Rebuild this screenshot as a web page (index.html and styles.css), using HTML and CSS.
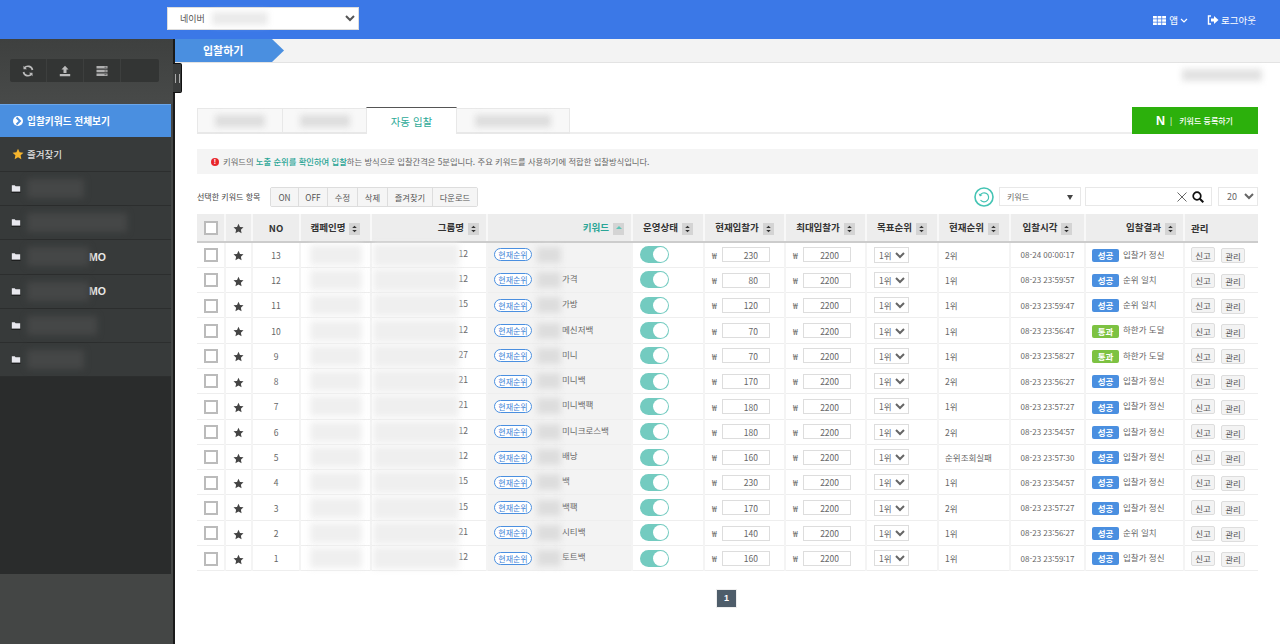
FILE: index.html
```html
<!DOCTYPE html>
<html lang="ko">
<head>
<meta charset="utf-8">
<title>입찰하기</title>
<link rel="stylesheet" href="styles.css">
</head>
<body>
<svg class="defs" width="0" height="0">
  <symbol id="sort" viewBox="0 0 12 12"><path d="M3.500 5 6 2.500 8.500 5zM3.500 7h5L6 9.500z" fill="#333"/></symbol>
  <symbol id="star" viewBox="0 0 24 24"><path d="M12 1.500l3.200 7.100 7.700.9-5.700 5.200 1.500 7.600L12 18.500l-6.700 3.800 1.500-7.600L1.100 9.500l7.700-.9z"/></symbol>
  <symbol id="folder" viewBox="0 0 12 10"><path d="M1 1h3.500l1 1.300H11v6.700H1z" fill="#e8e8ee"/><path d="M0.500 9.500h11" stroke="#111" stroke-width="1"/></symbol>
</svg>
<header class="topbar">
  <select class="site-select"><option>네이버</option></select>
  <div class="blur blur-site"></div>
  <nav class="topnav">
    <span class="topnav-item"><svg class="ico-apps" viewBox="0 0 13 9"><path d="M0 0h13v2.500H0zM0 3.250h13v2.500H0zM0 6.500h13V9H0z" fill="#fff"/><path d="M4.300 0v9M8.700 0v9" stroke="#3b78e7" stroke-width=".8"/></svg>앱<svg class="ico-chev" viewBox="0 0 8 5"><path d="M1 1l3 3 3-3" fill="none" stroke="#fff" stroke-width="1.200"/></svg></span>
    <span class="topnav-item"><svg class="ico-logout" viewBox="0 0 12 10"><path d="M4 1H1.500v8H4" fill="none" stroke="#fff" stroke-width="1.400"/><path d="M4 3.500h3V1l4.500 4L7 9V6.500H4z" fill="#fff"/></svg>로그아웃</span>
  </nav>
</header>
<div class="shell">
  <aside class="sidebar">
    <div class="side-tools">
      <div class="toolbox">
        <span class="tool"><svg viewBox="0 0 12 12"><path d="M10.500 5A4.600 4.600 0 0 0 2.400 3M1.500 7a4.600 4.600 0 0 0 8.100 2" fill="none" stroke="#bbb" stroke-width="1.700"/><path d="M1.500.8v3.500H5zM10.500 11.200V7.700H7z" fill="#bbb"/></svg></span>
        <span class="tool"><svg viewBox="0 0 12 12"><path d="M6 .8 9.500 4.500H7.500V8h-3V4.500h-2zM.8 9h10.400v2.200H.8z" fill="#bbb"/></svg></span>
        <span class="tool"><svg viewBox="0 0 12 12"><path d="M.5 1h11v2.500H.5zM.5 4.700h11v2.500H.5zM.5 8.400h11v2.500H.5z" fill="#b0b0b0"/><path d="M8.500 2.200h2M8.500 6h2M8.500 9.700h2" stroke="#444" stroke-width=".8"/></svg></span>
        <span class="tool"></span>
      </div>
    </div>
    <a class="side-active"><span class="bullet"><svg viewBox="0 0 10 10"><path d="M3.500 1.500 7 5 3.500 8.500" fill="none" stroke="#4a8fe0" stroke-width="2"/></svg></span>입찰키워드 전체보기</a>
    <a class="side-item side-fav"><svg class="ico-fav"><use href="#star"/></svg>즐겨찾기</a>
    <a class="side-item"><svg class="ico-folder"><use href="#folder"/></svg><span class="blur-dark w57"></span></a>
    <a class="side-item"><svg class="ico-folder"><use href="#folder"/></svg><span class="blur-dark w100"></span></a>
    <a class="side-item"><svg class="ico-folder"><use href="#folder"/></svg><span class="blur-dark w62"></span><b>MO</b></a>
    <a class="side-item"><svg class="ico-folder"><use href="#folder"/></svg><span class="blur-dark w62"></span><b>MO</b></a>
    <a class="side-item"><svg class="ico-folder"><use href="#folder"/></svg><span class="blur-dark w70"></span></a>
    <a class="side-item"><svg class="ico-folder"><use href="#folder"/></svg><span class="blur-dark w57"></span></a>
    <div class="side-fill"></div>
    <div class="side-foot"></div>
    <span class="side-handle"></span>
  </aside>
  <main class="main">
    <div class="crumb"><span class="crumb-label">입찰하기</span></div>
    <div class="content">
      <div class="account"><span class="blur blur-account"></span></div>
      <div class="tabs">
        <span class="tab tab1"><span class="blur blur-tab1"></span></span>
        <span class="tab tab2"><span class="blur blur-tab1"></span></span>
        <span class="tab tab-on">자동 입찰</span>
        <span class="tab tab4"><span class="blur blur-tab4"></span></span>
        <span class="tab-line"></span>
        <a class="btn-naver"><b class="n">N</b><i>|</i>키워드 등록하기</a>
      </div>
      <p class="notice"><span class="alert">!</span>키워드의 <em>노출 순위를 확인하여 입찰</em>하는 방식으로 입찰간격은 5분입니다. 주요 키워드를 사용하기에 적합한 입찰방식입니다.</p>
      <div class="toolbar">
        <span class="tb-label">선택한 키워드 항목</span>
        <div class="btn-group"><button>ON</button><button>OFF</button><button>수정</button><button>삭제</button><button>즐겨찾기</button><button>다운로드</button></div>
        <svg class="ico-refresh" viewBox="0 0 20 20"><circle cx="10" cy="10" r="9" fill="none" stroke="#45c4b4" stroke-width="1.600"/><path d="M6 8.500A4.500 4.500 0 1 1 6.500 13" fill="none" stroke="#45c4b4" stroke-width="1.200"/><path d="M4.500 6.500l1.500 3 2.500-1.500z" fill="#45c4b4"/></svg>
        <div class="fake-select">키워드<span class="tri"></span></div>
        <div class="search"><svg class="ico-x" viewBox="0 0 10 10"><path d="M.5.500l9 9M9.500.500l-9 9" stroke="#555" stroke-width=".9"/></svg><svg class="ico-search" viewBox="0 0 12 12"><circle cx="5" cy="5" r="3.800" fill="none" stroke="#111" stroke-width="1.700"/><path d="M7.800 7.800 11.300 11.300" stroke="#111" stroke-width="2"/></svg></div>
        <select class="page-size"><option>20</option></select>
      </div>
      <table class="grid">
        <colgroup><col class="c1"><col class="c2"><col class="c3"><col class="c4"><col class="c5"><col class="c6"><col class="c7"><col class="c8"><col class="c8"><col class="c7"><col class="c7"><col class="c12"><col class="c13"><col class="c14"></colgroup>
        <thead>
          <tr>
            <th><span class="check"></span></th>
            <th><svg class="ico-star"><use href="#star"/></svg></th>
            <th>NO</th>
            <th>캠페인명<svg class="sort"><use href="#sort"/></svg></th>
            <th class="right">그룹명<svg class="sort"><use href="#sort"/></svg></th>
            <th class="right kw">키워드<span class="sort-up"></span></th>
            <th>운영상태<svg class="sort"><use href="#sort"/></svg></th>
            <th>현재입찰가<svg class="sort"><use href="#sort"/></svg></th>
            <th>최대입찰가<svg class="sort"><use href="#sort"/></svg></th>
            <th>목표순위<svg class="sort"><use href="#sort"/></svg></th>
            <th>현재순위<svg class="sort"><use href="#sort"/></svg></th>
            <th>입찰시각<svg class="sort"><use href="#sort"/></svg></th>
            <th class="right">입찰결과<svg class="sort"><use href="#sort"/></svg></th>
            <th class="left">관리</th>
          </tr>
        </thead>
        <tbody>
          <tr><td><span class="check"></span></td><td><svg class="ico-star"><use href="#star"/></svg></td><td>13</td><td><span class="blur-cell b-camp"></span></td><td class="group"><span class="blur-cell b-group"></span>12</td><td class="kwcell"><span class="pill">현재순위</span><span class="blur-cell b-kw"></span></td><td class="ctl"><span class="toggle"></span></td><td class="ctl"><span class="won">₩</span><input class="num" value="230"></td><td class="ctl"><span class="won">₩</span><input class="num" value="2200"></td><td class="ctl"><select class="rank"><option>1위</option></select></td><td class="left">2위</td><td class="time">08-24 00:00:17</td><td class="left"><span class="tag ok">성공</span>입찰가 정신</td><td class="left"><button class="mini">신고</button><button class="mini low">관리</button></td></tr>
          <tr><td><span class="check"></span></td><td><svg class="ico-star"><use href="#star"/></svg></td><td>12</td><td><span class="blur-cell b-camp"></span></td><td class="group"><span class="blur-cell b-group"></span>12</td><td class="kwcell"><span class="pill">현재순위</span><span class="blur-cell b-kw"></span>가격</td><td class="ctl"><span class="toggle"></span></td><td class="ctl"><span class="won">₩</span><input class="num" value="80"></td><td class="ctl"><span class="won">₩</span><input class="num" value="2200"></td><td class="ctl"><select class="rank"><option>1위</option></select></td><td class="left">1위</td><td class="time">08-23 23:59:57</td><td class="left"><span class="tag ok">성공</span>순위 일치</td><td class="left"><button class="mini">신고</button><button class="mini low">관리</button></td></tr>
          <tr><td><span class="check"></span></td><td><svg class="ico-star"><use href="#star"/></svg></td><td>11</td><td><span class="blur-cell b-camp"></span></td><td class="group"><span class="blur-cell b-group"></span>15</td><td class="kwcell"><span class="pill">현재순위</span><span class="blur-cell b-kw"></span>가방</td><td class="ctl"><span class="toggle"></span></td><td class="ctl"><span class="won">₩</span><input class="num" value="120"></td><td class="ctl"><span class="won">₩</span><input class="num" value="2200"></td><td class="ctl"><select class="rank"><option>1위</option></select></td><td class="left">1위</td><td class="time">08-23 23:59:47</td><td class="left"><span class="tag ok">성공</span>순위 일치</td><td class="left"><button class="mini">신고</button><button class="mini low">관리</button></td></tr>
          <tr><td><span class="check"></span></td><td><svg class="ico-star"><use href="#star"/></svg></td><td>10</td><td><span class="blur-cell b-camp"></span></td><td class="group"><span class="blur-cell b-group"></span>12</td><td class="kwcell"><span class="pill">현재순위</span><span class="blur-cell b-kw"></span>메신저백</td><td class="ctl"><span class="toggle"></span></td><td class="ctl"><span class="won">₩</span><input class="num" value="70"></td><td class="ctl"><span class="won">₩</span><input class="num" value="2200"></td><td class="ctl"><select class="rank"><option>1위</option></select></td><td class="left">1위</td><td class="time">08-23 23:56:47</td><td class="left"><span class="tag pass">통과</span>하한가 도달</td><td class="left"><button class="mini">신고</button><button class="mini low">관리</button></td></tr>
          <tr><td><span class="check"></span></td><td><svg class="ico-star"><use href="#star"/></svg></td><td>9</td><td><span class="blur-cell b-camp"></span></td><td class="group"><span class="blur-cell b-group"></span>27</td><td class="kwcell"><span class="pill">현재순위</span><span class="blur-cell b-kw"></span>미니</td><td class="ctl"><span class="toggle"></span></td><td class="ctl"><span class="won">₩</span><input class="num" value="70"></td><td class="ctl"><span class="won">₩</span><input class="num" value="2200"></td><td class="ctl"><select class="rank"><option>1위</option></select></td><td class="left">1위</td><td class="time">08-23 23:58:27</td><td class="left"><span class="tag pass">통과</span>하한가 도달</td><td class="left"><button class="mini">신고</button><button class="mini low">관리</button></td></tr>
          <tr><td><span class="check"></span></td><td><svg class="ico-star"><use href="#star"/></svg></td><td>8</td><td><span class="blur-cell b-camp"></span></td><td class="group"><span class="blur-cell b-group"></span>21</td><td class="kwcell"><span class="pill">현재순위</span><span class="blur-cell b-kw"></span>미니백</td><td class="ctl"><span class="toggle"></span></td><td class="ctl"><span class="won">₩</span><input class="num" value="170"></td><td class="ctl"><span class="won">₩</span><input class="num" value="2200"></td><td class="ctl"><select class="rank"><option>1위</option></select></td><td class="left">2위</td><td class="time">08-23 23:56:27</td><td class="left"><span class="tag ok">성공</span>입찰가 정신</td><td class="left"><button class="mini">신고</button><button class="mini low">관리</button></td></tr>
          <tr><td><span class="check"></span></td><td><svg class="ico-star"><use href="#star"/></svg></td><td>7</td><td><span class="blur-cell b-camp"></span></td><td class="group"><span class="blur-cell b-group"></span>21</td><td class="kwcell"><span class="pill">현재순위</span><span class="blur-cell b-kw"></span>미니백팩</td><td class="ctl"><span class="toggle"></span></td><td class="ctl"><span class="won">₩</span><input class="num" value="180"></td><td class="ctl"><span class="won">₩</span><input class="num" value="2200"></td><td class="ctl"><select class="rank"><option>1위</option></select></td><td class="left">1위</td><td class="time">08-23 23:57:27</td><td class="left"><span class="tag ok">성공</span>입찰가 정신</td><td class="left"><button class="mini">신고</button><button class="mini low">관리</button></td></tr>
          <tr><td><span class="check"></span></td><td><svg class="ico-star"><use href="#star"/></svg></td><td>6</td><td><span class="blur-cell b-camp"></span></td><td class="group"><span class="blur-cell b-group"></span>12</td><td class="kwcell"><span class="pill">현재순위</span><span class="blur-cell b-kw"></span>미니크로스백</td><td class="ctl"><span class="toggle"></span></td><td class="ctl"><span class="won">₩</span><input class="num" value="180"></td><td class="ctl"><span class="won">₩</span><input class="num" value="2200"></td><td class="ctl"><select class="rank"><option>1위</option></select></td><td class="left">2위</td><td class="time">08-23 23:54:57</td><td class="left"><span class="tag ok">성공</span>입찰가 정신</td><td class="left"><button class="mini">신고</button><button class="mini low">관리</button></td></tr>
          <tr><td><span class="check"></span></td><td><svg class="ico-star"><use href="#star"/></svg></td><td>5</td><td><span class="blur-cell b-camp"></span></td><td class="group"><span class="blur-cell b-group"></span>12</td><td class="kwcell"><span class="pill">현재순위</span><span class="blur-cell b-kw"></span>배낭</td><td class="ctl"><span class="toggle"></span></td><td class="ctl"><span class="won">₩</span><input class="num" value="160"></td><td class="ctl"><span class="won">₩</span><input class="num" value="2200"></td><td class="ctl"><select class="rank"><option>1위</option></select></td><td class="left">순위조회실패</td><td class="time">08-23 23:57:30</td><td class="left"><span class="tag ok">성공</span>입찰가 정신</td><td class="left"><button class="mini">신고</button><button class="mini low">관리</button></td></tr>
          <tr><td><span class="check"></span></td><td><svg class="ico-star"><use href="#star"/></svg></td><td>4</td><td><span class="blur-cell b-camp"></span></td><td class="group"><span class="blur-cell b-group"></span>15</td><td class="kwcell"><span class="pill">현재순위</span><span class="blur-cell b-kw"></span>백</td><td class="ctl"><span class="toggle"></span></td><td class="ctl"><span class="won">₩</span><input class="num" value="230"></td><td class="ctl"><span class="won">₩</span><input class="num" value="2200"></td><td class="ctl"><select class="rank"><option>1위</option></select></td><td class="left">1위</td><td class="time">08-23 23:54:57</td><td class="left"><span class="tag ok">성공</span>입찰가 정신</td><td class="left"><button class="mini">신고</button><button class="mini low">관리</button></td></tr>
          <tr><td><span class="check"></span></td><td><svg class="ico-star"><use href="#star"/></svg></td><td>3</td><td><span class="blur-cell b-camp"></span></td><td class="group"><span class="blur-cell b-group"></span>15</td><td class="kwcell"><span class="pill">현재순위</span><span class="blur-cell b-kw"></span>백팩</td><td class="ctl"><span class="toggle"></span></td><td class="ctl"><span class="won">₩</span><input class="num" value="170"></td><td class="ctl"><span class="won">₩</span><input class="num" value="2200"></td><td class="ctl"><select class="rank"><option>1위</option></select></td><td class="left">2위</td><td class="time">08-23 23:57:27</td><td class="left"><span class="tag ok">성공</span>입찰가 정신</td><td class="left"><button class="mini">신고</button><button class="mini low">관리</button></td></tr>
          <tr><td><span class="check"></span></td><td><svg class="ico-star"><use href="#star"/></svg></td><td>2</td><td><span class="blur-cell b-camp"></span></td><td class="group"><span class="blur-cell b-group"></span>21</td><td class="kwcell"><span class="pill">현재순위</span><span class="blur-cell b-kw"></span>시티백</td><td class="ctl"><span class="toggle"></span></td><td class="ctl"><span class="won">₩</span><input class="num" value="140"></td><td class="ctl"><span class="won">₩</span><input class="num" value="2200"></td><td class="ctl"><select class="rank"><option>1위</option></select></td><td class="left">1위</td><td class="time">08-23 23:56:27</td><td class="left"><span class="tag ok">성공</span>순위 일치</td><td class="left"><button class="mini">신고</button><button class="mini low">관리</button></td></tr>
          <tr><td><span class="check"></span></td><td><svg class="ico-star"><use href="#star"/></svg></td><td>1</td><td><span class="blur-cell b-camp"></span></td><td class="group"><span class="blur-cell b-group"></span>12</td><td class="kwcell"><span class="pill">현재순위</span><span class="blur-cell b-kw"></span>토트백</td><td class="ctl"><span class="toggle"></span></td><td class="ctl"><span class="won">₩</span><input class="num" value="160"></td><td class="ctl"><span class="won">₩</span><input class="num" value="2200"></td><td class="ctl"><select class="rank"><option>1위</option></select></td><td class="left">1위</td><td class="time">08-23 23:59:17</td><td class="left"><span class="tag ok">성공</span>입찰가 정신</td><td class="left"><button class="mini">신고</button><button class="mini low">관리</button></td></tr>
        </tbody>
      </table>
      <div class="pager"><span class="page">1</span></div>
    </div>
  </main>
</div>
</body>
</html>
```
FILE: styles.css
```css
* { box-sizing: border-box; }
html, body { margin: 0; height: 644px; overflow: hidden; }
body { font-family: "Noto Sans CJK KR", "Liberation Sans", sans-serif; font-size: 9px; color: #555; background: #fff; }
.defs { position: absolute; }
.topbar { height: 39px; background: #3b78e7; display: flex; align-items: flex-start; padding: 7px 24px 0 167px; position: relative; }
.site-select { width: 192px; height: 23px; border: 1px solid #ddd; background: #fff; font: 9px "Noto Sans CJK KR", sans-serif; color: #555; padding-left: 8px; }
.blur { display: block; background: #d8d8d8; filter: blur(3px); }
.blur-site { position: absolute; left: 212px; top: 12px; width: 56px; height: 13px; background: #eaeaea; }
.topnav { margin-left: auto; display: flex; gap: 19px; padding-top: 6px; color: #fff; font-size: 9.5px; }
.topnav-item { display: inline-flex; align-items: center; line-height: 14px; }
.ico-apps { width: 13px; height: 9px; margin-right: 3px; }
.ico-chev { width: 8px; height: 5px; margin-left: 2px; }
.ico-logout { width: 12px; height: 10px; margin-right: 2px; }
.shell { display: flex; height: 605px; }
.sidebar { width: 175px; flex: none; display: flex; flex-direction: column; background: #444645; border-right: 2px solid #1a1a1a; position: relative; }
.side-tools { height: 65px; padding: 20px 12px 0 10px; background: linear-gradient(#3e403f, #484a49); }
.toolbox { display: flex; width: 149px; height: 23px; background: #333534; border-radius: 2px; }
.tool { width: 37px; display: flex; align-items: center; justify-content: center; border-right: 1px solid #3d3f3e; }
.tool svg { width: 12px; height: 12px; }
.tool:last-child { border-right: 0; }
.side-active { height: 33px; width: 171px; background: #4a8fe0; border-top: 1px solid #6ba6ea; color: #fff; font-size: 9.700px; font-weight: 700; display: flex; align-items: center; padding-left: 13px; }
.bullet { width: 10px; height: 10px; background: #fff; border-radius: 50%; margin-right: 4px; display: flex; }
.bullet svg { width: 10px; height: 10px; }
.side-item { height: 34.2px; flex: none; width: 171px; background: #373a3a; border-bottom: 1px solid #2c2e2e; color: #ddd; font-size: 9.5px; display: flex; align-items: center; padding-left: 11px; font-weight: 500; }
.side-fav { height: 35px; }
.side-item b { color: #e8e8e8; font: 700 10.5px "Liberation Sans", sans-serif; }
.ico-fav { width: 12px; height: 12px; fill: #f5b52e; margin: 0 3px 0 1px; }
.ico-folder { width: 10px; height: 9px; margin-right: 6px; flex: none; }
.blur-dark { display: block; height: 19px; background: #454747; filter: blur(3px); }
.w57 { width: 57px; } .w62 { width: 62px; } .w70 { width: 70px; } .w100 { width: 100px; }
.side-fill { height: 197px; width: 171px; flex: none; background: #2a2c2c; }
.side-foot { flex: 1; background: #444645; }
.side-handle { position: absolute; left: 173px; top: 24px; width: 9px; height: 30px; background: #3a3c3c; border: 1px solid #111; border-left: 0; border-radius: 0 2px 2px 0; }
.side-handle::after { content: ""; position: absolute; left: 2px; top: 10px; width: 3px; height: 9px; border-left: 1px solid #aaa; border-right: 1px solid #aaa; }
.main { flex: 1; min-width: 0; }
.crumb { height: 24px; background: #f3f3f3; border-bottom: 1px solid #e3e3e3; display: flex; }
.crumb-label { width: 109px; height: 23px; background: #4a8fe0; color: #fff; font-size: 11px; font-weight: 700; padding-left: 28px; line-height: 22px; clip-path: polygon(0 0, 97px 0, 109px 50%, 97px 100%, 0 100%); }
.content { padding: 5px 22px 0 22px; }
.account { height: 39px; display: flex; justify-content: flex-end; }
.blur-account { width: 80px; height: 12px; margin-top: 1px; margin-right: -4px; background: #e2e2e2; }
.tabs { display: flex; height: 27px; align-items: flex-end; }
.tab { height: 26px; width: 85px; background: #f8f8f8; border: 1px solid #e8e8e8; border-bottom: 2px solid #e8e8e8; display: flex; align-items: center; justify-content: center; font-size: 10.5px; }
.tab1 { width: 86px; }
.tab2 { margin-left: -1px; }
.blur-tab1 { width: 50px; height: 12px; background: #ddd; }
.blur-tab4 { width: 76px; height: 12px; background: #ddd; }
.tab-on { width: 91px; height: 27px; background: #fff; color: #2eaa98; border-top: 1px solid #555; border-bottom: 0; margin-left: -1px; }
.tab4 { width: 114px; margin-left: -1px; }
.tab-line { flex: 1; height: 2px; background: #eee; }
.btn-naver { width: 126px; height: 27px; background: #2cb00c; color: #fff; font-size: 8px; font-weight: 500; display: flex; align-items: center; padding-left: 24px; }
.btn-naver .n { font: 900 12.500px "Liberation Sans", sans-serif; margin-right: 5px; }
.btn-naver i { font-style: normal; margin-right: 7px; font-weight: 400; }
.notice { margin: 15px 0 0; height: 25px; background: #f4f4f4; font-size: 8.3px; line-height: 25px; padding-left: 14px; color: #666; display: flex; align-items: center; white-space: pre-wrap; }
.notice em { font-style: normal; color: #2aa596; font-weight: 500; }
.alert { width: 8px; height: 8px; border-radius: 50%; background: #e8262c; color: #fff; font: 700 7px/8px "Liberation Sans", sans-serif; text-align: center; margin-right: 4px; flex: none; }
.toolbar { display: flex; align-items: center; height: 21px; margin-top: 12px; }
.tb-label { width: 73px; color: #444; font-size: 8px; white-space: nowrap; }
.btn-group { display: flex; height: 20px; border: 1px solid #ddd; border-radius: 2px; background: #f3f3f3; }
.btn-group button { border: 0; border-right: 1px solid #ddd; background: #f5f5f5; font: 8.3px "Noto Sans CJK KR", sans-serif; color: #555; padding: 0; width: 28px; }
.btn-group button:nth-child(2) { width: 29px; }
.btn-group button:nth-child(3), .btn-group button:nth-child(4) { width: 30px; }
.btn-group button:nth-child(5) { width: 45px; }
.btn-group button:last-child { width: 44px; border-right: 0; }
.ico-refresh { width: 20px; height: 20px; margin-left: auto; margin-right: 5px; }
.fake-select { width: 82px; height: 19px; border: 1px solid #e8e8e8; padding-left: 7px; font-size: 8px; line-height: 17px; color: #666; position: relative; margin-right: 4px; }
.tri { position: absolute; right: 7px; top: 7px; border: 3px solid transparent; border-top: 5px solid #444; border-bottom: 0; }
.search { width: 127px; height: 19px; border: 1px solid #e8e8e8; display: flex; align-items: center; justify-content: flex-end; padding-right: 7px; gap: 5px; margin-right: 6px; }
.ico-x { width: 10px; height: 10px; }
.ico-search { width: 12px; height: 12px; }
.page-size { width: 40px; height: 19px; border: 1px solid #e8e8e8; background: #fff; font: 9px "Noto Sans CJK KR", sans-serif; color: #666; padding-left: 4px; }
.grid { width: 1061px; table-layout: fixed; border-collapse: collapse; margin-top: 7px; }
.c1 { width: 28px; } .c2 { width: 27px; } .c3 { width: 48px; } .c4 { width: 71px; } .c5 { width: 116px; } .c6 { width: 145px; }
.c7 { width: 72px; } .c8 { width: 81px; } .c12 { width: 75px; } .c13 { width: 99px; } .c14 { width: 74px; }
.grid th { height: 28px; background: #ededed; border-right: 2px solid #f8f8f8; border-bottom: 2px solid #ccc; color: #333; font-size: 9.5px; font-weight: 700; text-align: center; padding: 0 4px; white-space: nowrap; }
.grid td { height: 25.3px; border-right: 2px solid #f4f4f4; border-bottom: 1px solid #eee; text-align: center; color: #666; font-size: 8.500px; padding: 0 4px; white-space: nowrap; }
.grid th:last-child, .grid td:last-child { border-right: 0; }
.grid th.right { text-align: right; padding-right: 7px; }
.grid .left { text-align: left; padding-left: 6px; }
.grid .kw { color: #2aa596; }
.grid .group { text-align: right; padding: 0 18px 0 0; }
.grid .ctl { text-align: left; padding-left: 7px; padding-right: 0; }
.grid .time { font-size: 8px; }
.check { display: inline-block; width: 14px; height: 14px; border: 2px solid #bbb; background: #fff; vertical-align: middle; }
.ico-star { width: 11px; height: 11px; fill: #444; vertical-align: middle; }
.sort { width: 11px; height: 12px; background: #d4d4d4; margin-left: 4px; vertical-align: middle; }
.sort-up { display: inline-block; width: 11px; height: 12px; background: #d4d4d4; margin-left: 4px; vertical-align: middle; position: relative; }
.sort-up::after { content: ""; position: absolute; left: 3px; top: 3px; border: 3px solid transparent; border-bottom: 3px solid #5cc4b6; border-top: 0; }
.blur-cell { display: inline-block; background: #e6e6e6; filter: blur(3px); vertical-align: middle; }
.b-camp { width: 52px; height: 20px; background: #efefef; }
.b-group { width: 86px; height: 22px; background: #efefef; }
.b-kw { width: 24px; height: 16px; background: #ddd; margin: 0 1px 0 5px; }
.grid .kwcell { background: #f3f3f3; text-align: left; padding-left: 6px; }
.pill { display: inline-block; width: 38px; height: 13px; line-height: 11px; border: 1px solid #4a8fe0; border-radius: 7px; background: #fff; color: #3f83d6; font-size: 8px; text-align: center; vertical-align: middle; }
.toggle { display: inline-block; width: 29px; height: 17px; border-radius: 9px; background: #73cbc0; position: relative; vertical-align: middle; }
.toggle::after { content: ""; position: absolute; right: 1px; top: 1px; width: 15px; height: 15px; border-radius: 50%; background: #fff; }
.won { display: inline-block; width: 10px; color: #666; font-size: 8.500px; vertical-align: middle; }
.num { width: 48px; height: 15px; border: 1px solid #ddd; text-align: right; padding: 0 11px 0 0; font: 8.500px "Noto Sans CJK KR", sans-serif; color: #666; vertical-align: middle; }
.rank { width: 35px; height: 16px; border: 1px solid #ddd; background: #fff; font: 8.500px "Noto Sans CJK KR", sans-serif; color: #666; padding: 0; vertical-align: middle; }
.tag { display: inline-block; width: 27px; height: 13px; line-height: 13px; border-radius: 2px; color: #fff; font-size: 8.500px; font-weight: 700; text-align: center; margin-right: 4px; vertical-align: middle; }
.tag.ok { background: #4a8fe0; }
.tag.pass { background: #7dc242; }
.mini { width: 24px; height: 15px; padding: 0; border: 1px solid #ddd; border-radius: 2px; background: #f3f3f3; font: 8.500px "Noto Sans CJK KR", sans-serif; color: #555; vertical-align: middle; }
.mini.low { margin-left: 6px; position: relative; top: 1px; }
.pager { display: flex; justify-content: center; margin-top: 18px; padding-right: 2px; }
.page { width: 21px; height: 19px; background: #4e5d6a; border: 1px solid #eee; color: #fff; font: 700 9px/17px "Liberation Sans", sans-serif; text-align: center; }
```
